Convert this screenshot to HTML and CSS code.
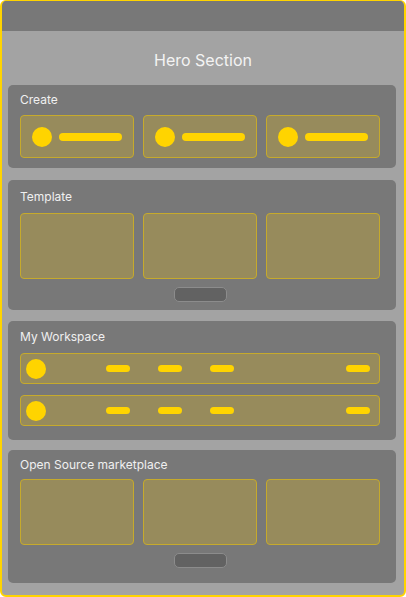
FILE: index.html
```html
<!DOCTYPE html>
<html>
<head>
<meta charset="utf-8">
<link rel="stylesheet" href="styles.css">
</head>
<body>
<div class="frame">
  <div class="topbar"></div>
  <h1 class="hero">Hero Section</h1>
  <div class="sections">
    <section class="panel panel-create">
      <div class="panel-title">Create</div>
      <div class="grid3">
        <div class="card create-card"><span class="dot"></span><span class="line"></span></div>
        <div class="card create-card"><span class="dot"></span><span class="line"></span></div>
        <div class="card create-card"><span class="dot"></span><span class="line"></span></div>
      </div>
    </section>
    <section class="panel panel-template">
      <div class="panel-title">Template</div>
      <div class="grid3">
        <div class="card tile"></div>
        <div class="card tile"></div>
        <div class="card tile"></div>
      </div>
      <div class="more"><span class="more-btn"></span></div>
    </section>
    <section class="panel panel-work">
      <div class="panel-title">My Workspace</div>
      <div class="rows">
        <div class="card row"><span class="dot"></span><span class="dash d1"></span><span class="dash"></span><span class="dash"></span><span class="dash dlast"></span></div>
        <div class="card row"><span class="dot"></span><span class="dash d1"></span><span class="dash"></span><span class="dash"></span><span class="dash dlast"></span></div>
      </div>
    </section>
    <section class="panel panel-market">
      <div class="panel-title">Open Source marketplace</div>
      <div class="grid3">
        <div class="card tile"></div>
        <div class="card tile"></div>
        <div class="card tile"></div>
      </div>
      <div class="more"><span class="more-btn"></span></div>
    </section>
  </div>
</div>
</body>
</html>
```
FILE: styles.css
```css
* { box-sizing: border-box; }
html, body { margin: 0; padding: 0; }
body {
  width: 406px;
  height: 597px;
  font-family: Inter, "Noto Sans", sans-serif;
  background: #ffffff;
}
.frame {
  width: 406px;
  height: 597px;
  border-style: solid;
  border-color: #ffd400;
  border-width: 1px 2px 2px 2px;
  border-radius: 6px;
  background: #a3a3a3;
  overflow: hidden;
}
.topbar {
  height: 30px;
  background: #787878;
}
.hero {
  margin: 0;
  height: 54px;
  padding-top: 19px;
  font-size: 16px;
  line-height: 20px;
  font-weight: 400;
  color: #f3f3f3;
  text-align: center;
}
.sections {
  display: flex;
  flex-direction: column;
  margin-left: 6px;
  width: 388px;
}
.panel {
  background: #787878;
  border-radius: 5px;
  padding: 7px 16px 10px 12px;
}
.panel-title {
  font-size: 12px;
  line-height: 15px;
  color: #f0f0f0;
  margin-bottom: 8px;
}
.panel-template {
  margin-top: 12px;
  padding-top: 9px;
  padding-bottom: 8px;
}
.panel-template .panel-title { margin-bottom: 9px; }
.panel-work {
  margin-top: 11px;
  padding-top: 8px;
  padding-bottom: 14px;
}
.panel-work .panel-title { margin-bottom: 9px; }
.panel-market {
  margin-top: 10px;
  padding-top: 7px;
  padding-bottom: 15px;
}
.panel-market .panel-title { margin-bottom: 7px; }
.grid3 {
  display: grid;
  grid-template-columns: 114px 114px 114px;
  column-gap: 9px;
}
.card {
  background: #978b5c;
  border: 1px solid #c6aa2c;
  border-radius: 4px;
}
.create-card {
  height: 43px;
  display: flex;
  align-items: center;
  padding: 0 11px 0 11px;
  gap: 7px;
}
.dot {
  width: 20px;
  height: 20px;
  border-radius: 50%;
  background: #ffd400;
  flex: none;
}
.line {
  flex: 1;
  height: 8px;
  border-radius: 4px;
  background: #ffd400;
}
.tile { height: 66px; }
.more {
  display: flex;
  justify-content: center;
  margin-top: 8px;
}
.more-btn {
  width: 53px;
  height: 15px;
  border-radius: 5px;
  background: #626262;
  border: 1px solid #8c8c8c;
}
.rows {
  display: flex;
  flex-direction: column;
  gap: 11px;
}
.row {
  height: 31px;
  display: flex;
  align-items: center;
  padding: 0 9px 0 5px;
}
.dash {
  width: 24px;
  height: 7px;
  border-radius: 4px;
  background: #ffd400;
  margin-left: 28px;
  flex: none;
}
.dash.d1 { margin-left: 60px; }
.dash.dlast { margin-left: auto; }
```
